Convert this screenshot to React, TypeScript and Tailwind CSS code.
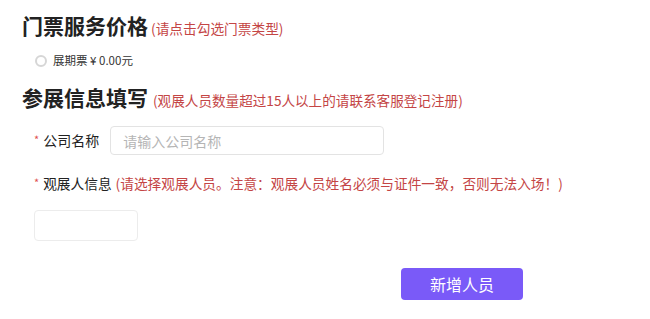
import { useState } from 'react'

export default function App() {
  const [company, setCompany] = useState('')

  return (
    <div className="w-[650px] h-[319px] bg-white text-[#222] overflow-hidden font-['Noto_Sans_CJK_SC','Noto_Sans',sans-serif]">
      <div className="pl-[22px] pt-[10px]">
        {/* 门票 */}
        <div className="flex items-end h-[30px]">
          <h2 className="text-[21px] leading-[30px] font-bold">门票服务价格</h2>
          <span className="ml-[3px] mb-[3px] text-[13.7px] leading-[18px] text-[#c44545]">(请点击勾选门票类型)</span>
        </div>

        <label className="flex items-center mt-[10px] ml-[13px] h-[22px] text-[11.5px] text-[#333]">
          <span className="w-[12px] h-[12px] rounded-full border-2 border-[#d6d6d6] bg-white" />
          <span className="ml-[6px]">展期票 ¥ 0.00元</span>
        </label>

        {/* 参展信息 */}
        <div className="flex items-end h-[30px] mt-[10px]">
          <h2 className="text-[21px] leading-[30px] font-bold">参展信息填写</h2>
          <span className="ml-[5px] mb-[2px] text-[13.6px] leading-[20px] text-[#c44545]">(观展人员数量超过15人以上的请联系客服登记注册)</span>
        </div>

        <div className="flex items-center mt-[14px] ml-[12px]">
          <span className="text-[#e05050] text-[11px] mr-[4px] -mt-[3px]">*</span>
          <span className="text-[14px] text-[#222]">公司名称</span>
          <input
            value={company}
            onChange={(e) => setCompany(e.target.value)}
            placeholder="请输入公司名称"
            className="ml-[11px] w-[274px] h-[29px] px-[12px] text-[14px] border border-[#e3e3e3] rounded-[4px] outline-none placeholder:text-[#b5b5b5]"
          />
        </div>

        <div className="flex items-center mt-[18px] ml-[12px] text-[13.7px]">
          <span className="text-[#e05050] text-[11px] mr-[4px] -mt-[3px]">*</span>
          <span className="text-[#222]">观展人信息</span>
          <span className="ml-[4px] text-[#c44545]">(请选择观展人员。注意：观展人员姓名必须与证件一致，否则无法入场！)</span>
        </div>

        <div className="mt-[16px] ml-[12px] w-[104px] h-[31px] border border-[#ececec] rounded-[4px]" />

        <div className="flex mt-[27px] ml-[379px]">
          <button className="w-[122px] h-[32px] rounded-[4px] bg-[#7a5af8] text-white text-[16px]">新增人员</button>
        </div>
      </div>
    </div>
  )
}
